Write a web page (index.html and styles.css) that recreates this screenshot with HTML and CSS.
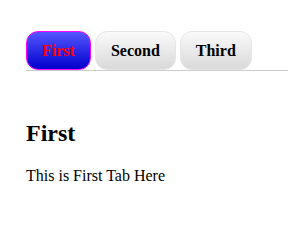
FILE: index.html
```html
<!DOCTYPE html>
<html lang="en">
<head>
    <meta charset="UTF-8">
    <meta name="viewport" content="width=device-width, initial-scale=1.0">
    <title>Tabs</title>
    <link rel="stylesheet" href="styles.css">
</head>
<body>
    <div class="tab-bar">
        <button class="tab active">First</button>
        <button class="tab">Second</button>
        <button class="tab">Third</button>
    </div>
    <div class="tab-content">
        <h2>First</h2>
        <p>This is First Tab Here</p>
    </div>
</body>
</html>
```

FILE: styles.css
```css
body {
    margin: 0;
    font-family: "Liberation Serif", "Times New Roman", serif;
    color: #000;
    background-color: #fff;
}
.tab-bar {
    display: flex;
    gap: 4px;
    margin: 31px 0 0 26px;
    border-bottom: 1px solid #ccc;
}
.tab {
    font-family: inherit;
    font-size: 16px;
    font-weight: bold;
    line-height: 18px;
    padding: 10px 15px 9px;
    border: 1px solid #e6e6e6;
    border-radius: 12px;
    background: linear-gradient(to bottom, #fafafa, #d9d9d9);
    color: #000;
    cursor: pointer;
}
.tab.active {
    border-color: #f0f;
    background: linear-gradient(to bottom, #5555ff, #0000cc);
    color: #f00;
}
.tab-content {
    padding: 0 26px;
}
.tab-content h2 {
    font-size: 24px;
    margin: 49px 0 0;
}
.tab-content p {
    font-size: 16px;
    margin: 20px 0 0;
}
```
